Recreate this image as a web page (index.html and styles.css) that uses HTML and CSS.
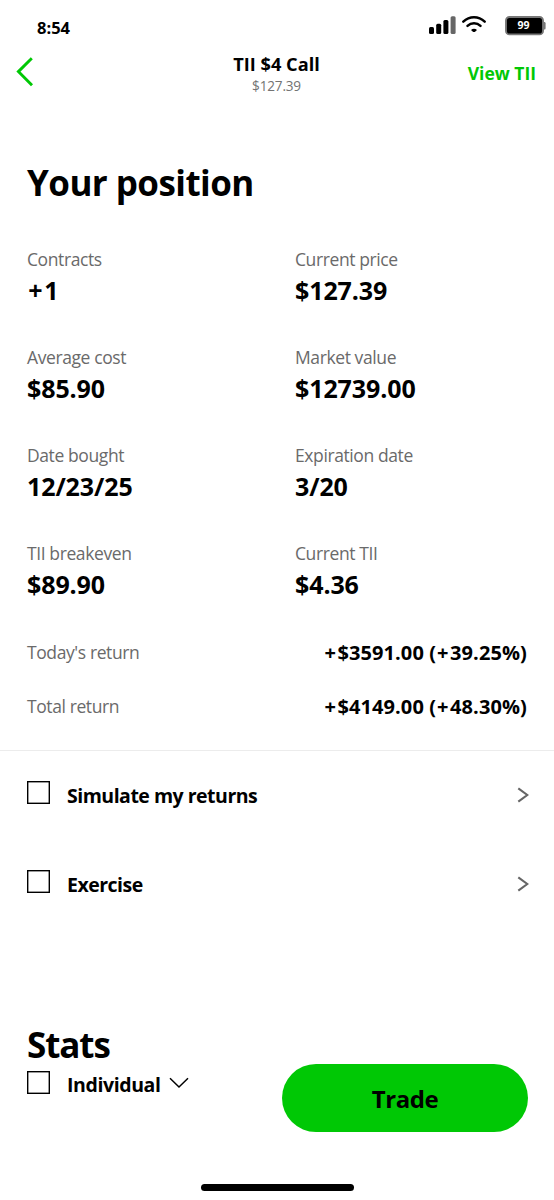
FILE: index.html
```html
<!DOCTYPE html>
<html lang="en">
<head>
    <meta charset="UTF-8">
    <meta name="viewport" content="width=device-width">
    <title>TII $4 Call</title>
    <link rel="stylesheet" href="styles.css">
</head>
<body>
    <div class="status-bar">
        <span class="time">8:54</span>
        <svg class="status-icons" width="118" height="22" viewBox="0 0 118 22">
            <!-- signal -->
            <rect x="1" y="13" width="5" height="7" rx="1.5"/>
            <rect x="8.2" y="9.7" width="5" height="10.3" rx="1.5"/>
            <rect x="15.4" y="6" width="5" height="14" rx="1.5"/>
            <rect x="22.6" y="2.3" width="5" height="17.7" rx="1.5" fill="#666"/>
            <!-- wifi -->
            <g fill="none" stroke="#000" stroke-width="2.5" stroke-linecap="round">
                <path d="M35.3 7.6C41.5 1.8 50.5 1.8 56.7 7.6"/>
                <path d="M39.5 11.9C43.2 8.5 48.8 8.5 52.5 11.9"/>
            </g>
            <path d="M43 16C44.8 14.2 47.2 14.2 49 16L47.4 17.4Q46 18.4 44.6 17.4Z"/>
            <!-- battery -->
            <path d="M115.6 8h1Q117.6 8 117.6 9.5v4.5Q117.6 15.6 116.6 15.6h-1z" fill="#777"/>
            <rect x="78" y="3" width="37" height="17.4" rx="3.5" stroke="#777" stroke-width="1.9"/>
        </svg>
        <span class="battery">99</span>
    </div>

    <div class="nav">
        <svg class="back" width="20" height="32" viewBox="0 0 20 32">
            <path d="M16.8 2.3L3.4 15.6L17 29.3" fill="none" stroke="#00c805" stroke-width="2.9"/>
        </svg>
        <div class="nav-title">
            <div class="name">TII $4 Call</div>
            <div class="price">$127.39</div>
        </div>
        <a class="view-link">View TII</a>
    </div>

    <h1 class="position-title">Your position</h1>
    <div class="grid">
        <div class="cell"><div class="label">Contracts</div><div class="value"><span class="plus">+</span>1</div></div>
        <div class="cell"><div class="label">Current price</div><div class="value">$127.39</div></div>
        <div class="cell"><div class="label">Average cost</div><div class="value">$85.90</div></div>
        <div class="cell"><div class="label">Market value</div><div class="value">$12739.00</div></div>
        <div class="cell"><div class="label">Date bought</div><div class="value">12/23/25</div></div>
        <div class="cell"><div class="label">Expiration date</div><div class="value">3/20</div></div>
        <div class="cell"><div class="label">TII breakeven</div><div class="value">$89.90</div></div>
        <div class="cell"><div class="label">Current TII</div><div class="value">$4.36</div></div>
    </div>

    <div class="returns">
        <div class="return-row"><span class="label">Today's return</span><span class="amount"><span class="plus">+</span>$3591.00 (<span class="plus">+</span>39.25%)</span></div>
        <div class="return-row"><span class="label">Total return</span><span class="amount"><span class="plus">+</span>$4149.00 (<span class="plus">+</span>48.30%)</span></div>
    </div>

    <div class="actions">
        <div class="action">
            <svg class="box" width="24" height="24" viewBox="0 0 24 24"><rect x=".7" y=".7" width="21.6" height="21.6" fill="none" stroke="#000" stroke-width="1.4"/></svg>
            <span class="action-text simulate">Simulate my returns</span>
            <svg class="chevron" width="12" height="16" viewBox="0 0 12 16">
                <path d="M1.3 1.3L10.3 8L1.3 14.7" fill="none" stroke="#666" stroke-width="2.1"/>
            </svg>
        </div>
        <div class="action">
            <svg class="box" width="24" height="24" viewBox="0 0 24 24"><rect x=".7" y=".7" width="21.6" height="21.6" fill="none" stroke="#000" stroke-width="1.4"/></svg>
            <span class="action-text exercise">Exercise</span>
            <svg class="chevron" width="12" height="16" viewBox="0 0 12 16">
                <path d="M1.3 1.3L10.3 8L1.3 14.7" fill="none" stroke="#666" stroke-width="2.1"/>
            </svg>
        </div>
    </div>

    <div class="footer">
        <div class="stats">
            <h1 class="stats-title">Stats</h1>
            <div class="account">
                <svg class="box" width="24" height="24" viewBox="0 0 24 24"><rect x=".7" y=".7" width="21.6" height="21.6" fill="none" stroke="#000" stroke-width="1.4"/></svg>
                <span class="action-text individual">Individual</span>
                <svg class="down" width="20" height="12" viewBox="0 0 20 12">
                    <path d="M1 1.2L10 10L19 1.2" fill="none" stroke="#000" stroke-width="1.5"/>
                </svg>
            </div>
        </div>
        <button class="trade">Trade</button>
    </div>
    <div class="home-bar"></div>
</body>
</html>
```

FILE: styles.css
```css
* {
    box-sizing: border-box;
}
body {
    margin: 0;
    height: 1200px;
    overflow: hidden;
    background: #fff;
    color: #000;
    font-family: "Open Sans", sans-serif;
    white-space: nowrap;
}
h1 {
    margin: 0;
    font-weight: 700;
}
.status-bar {
    position: relative;
    display: flex;
    justify-content: space-between;
    height: 50px;
    padding: 14px 8px 0 37px;
}
.time {
    font-size: 16.5px;
    line-height: 27px;
    font-weight: 700;
}
/* charge level sits on top of the battery */
.battery {
    position: absolute;
    left: 505px;
    top: 16px;
    width: 37px;
    line-height: 19px;
    text-align: center;
    color: #fff;
    font-size: 10.5px;
    font-weight: 700;
}
.nav {
    display: grid;
    grid-template-columns: 100px 1fr 100px;
    height: 60px;
    padding: 0 18px 0 15px;
}
.back {
    margin-top: 6px;
}
.nav-title {
    padding: 1px 0 0 2px;
    text-align: center;
}
.name {
    font-size: 18.2px;
    line-height: 27px;
    font-weight: 700;
}
.price {
    font-size: 13.6px;
    line-height: 15px;
    letter-spacing: -0.2px;
    color: #737373;
}
.view-link {
    color: #00c805;
    font-size: 17.5px;
    line-height: 46px;
    font-weight: 700;
    text-align: right;
}
.position-title {
    margin: 49px 0 0 27px;
    font-size: 35px;
    line-height: 48px;
    letter-spacing: -0.55px;
}
.grid {
    display: grid;
    grid-template-columns: 268px 1fr;
    grid-auto-rows: 60px;
    row-gap: 38.25px;
    margin-top: 39.6px;
    padding-left: 27px;
}
.label {
    font-size: 17.5px;
    line-height: 24px;
    letter-spacing: -0.4px;
    color: #6a6a6a;
}
.value {
    margin-top: 2px;
    font-size: 25px;
    line-height: 34px;
    font-weight: 700;
    letter-spacing: -0.1px;
}
.plus {
    margin: 0 0.07em 0 0.05em;
}
.returns {
    height: 125.25px;
    margin-top: 24.15px;
    padding: 0 27px;
    border-bottom: 1px solid #ececec;
}
.return-row {
    display: flex;
    justify-content: space-between;
    align-items: center;
    height: 53.7px;
}
.amount {
    padding-top: 2px;
    font-size: 20px;
    line-height: 28px;
    font-weight: 700;
    letter-spacing: 0.1px;
}
.actions {
    padding: 30px 25px 0 27px;
}
.action {
    display: flex;
    height: 89.3px;
}
.box {
    flex: none;
    margin-right: 16px;
}
.action-text {
    font-size: 19.5px;
    line-height: 30px;
    font-weight: 700;
    letter-spacing: -0.5px;
}
.chevron {
    margin: 6px 0 0 auto;
}
.footer {
    display: flex;
    justify-content: space-between;
    height: 165px;
    margin-top: 59.4px;
    padding: 0 26px 0 27px;
}
.stats {
    padding-top: 1px;
}
.stats-title {
    font-size: 35px;
    line-height: 49px;
    letter-spacing: -1.1px;
}
.account {
    display: flex;
    margin-top: 2px;
}
.individual {
    line-height: 27px;
    letter-spacing: -0.4px;
}
.down {
    margin: 6px 0 0 8px;
}
.trade {
    width: 246px;
    height: 68px;
    margin-top: 45px;
    padding: 1px 0 0;
    border: 0;
    border-radius: 34px;
    background: #00c805;
    color: #000;
    font: 700 24px/68px "Open Sans", sans-serif;
    letter-spacing: -0.4px;
}
.home-bar {
    width: 153px;
    height: 7px;
    margin: 0 auto;
    border-radius: 4px;
    background: #000;
}
```
